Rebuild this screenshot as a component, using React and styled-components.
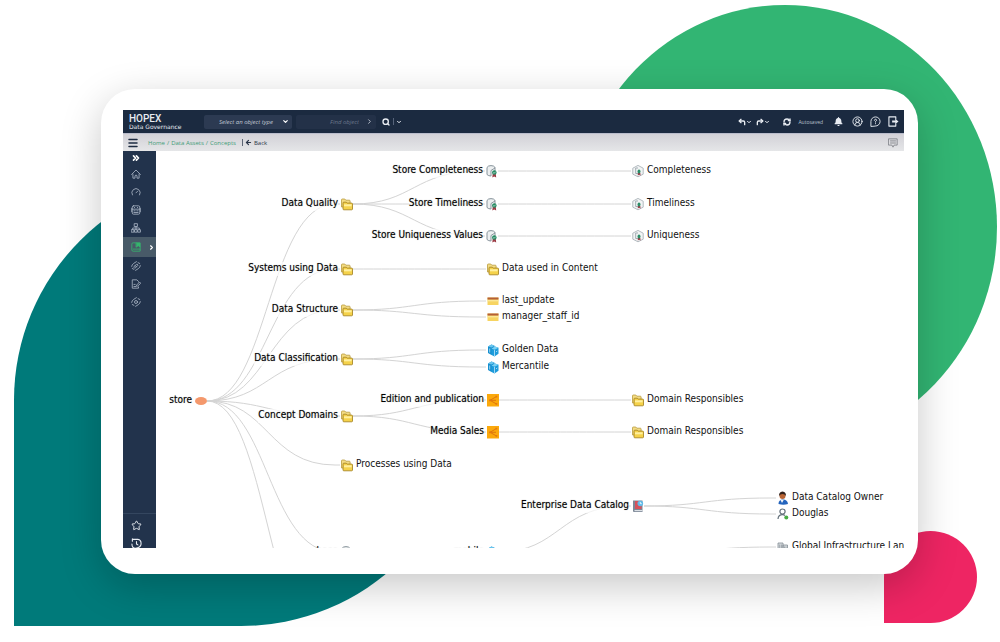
import styled, { createGlobalStyle, css } from 'styled-components';
import {
  ArrowLeft, ChevronDown, ChevronRight, ChevronsRight, CircleUserRound, CornerUpLeft, CornerUpRight,
  Gauge, Menu, RefreshCw, Search, Star,
} from 'lucide-react';
import { FaBell } from 'react-icons/fa';

const GlobalStyle = createGlobalStyle`
  * { box-sizing: border-box; }
  body {
    margin: 0;
    background: #fff;
    font-family: "Open Sans", "Noto Sans", sans-serif;
  }
  button, select, input { font: inherit; color: inherit; }
`;

const Page = styled.main`
  position: relative;
  display: flex;
  min-height: 100vh;
  padding: 89px 82px 68px 101px;
  overflow: hidden;
`;

const Blob = styled.div`
  position: absolute;
  ${({ $shape }) => $shape === 'green' && css`
    top: 5px; right: 3px; width: 424px; height: 444px;
    border-radius: 50%;
    background: #32b573;
  `}
  ${({ $shape }) => $shape === 'teal' && css`
    left: 14px; bottom: 16px; width: 454px; height: 452px;
    border-radius: 50% 50% 50% 0;
    background: #007a7a;
  `}
  ${({ $shape }) => $shape === 'pink' && css`
    right: 23px; bottom: 19px; width: 93px; height: 92px;
    border-radius: 50% 50% 50% 0;
    background: #ee2563;
  `}
`;

const Card = styled.div`
  position: relative;
  display: flex;
  flex: 1;
  min-width: 0;
  padding: 21px 14px 26px 22px;
  border-radius: 34px;
  background: #fff;
  box-shadow: 0 12px 40px rgba(0, 0, 0, 0.22);
`;

const Screen = styled.div`
  display: flex;
  flex: 1;
  flex-direction: column;
  min-width: 0;
  overflow: hidden;
`;

const TopBar = styled.header`
  display: flex;
  align-items: center;
  flex: 0 0 24px;
  padding: 0 5px 0 6px;
  border-bottom: 1px solid #b9bccb;
  background: #1b2a40;
  color: #e8ecf2;
`;

const Brand = styled.div`
  width: 75px;
`;

const BrandName = styled.div`
  font: 500 10px/9px Roboto, sans-serif;
`;

const BrandProduct = styled.div`
  font: 6px/7px "DejaVu Sans", sans-serif;
  white-space: nowrap;
`;

const Field = styled.label`
  display: flex;
  align-items: center;
  width: ${({ $width }) => $width}px;
  height: 14px;
  margin-right: 4px;
  padding-right: 3px;
  border-radius: 2px;
  background: ${({ $dim }) => ($dim ? '#233148' : '#2c3a52')};
  color: ${({ $dim }) => ($dim ? '#c3cad5' : '#fff')};
`;

const fieldText = css`
  flex: 1;
  min-width: 0;
  padding: 0;
  border: 0;
  outline: 0;
  background: none;
  font: italic 6px/12px "Open Sans", sans-serif;
  appearance: none;
`;

const TypeSelect = styled.select`
  ${fieldText}
  padding-left: 15px;
  color: #c3cad5;
`;

const ObjectInput = styled.input`
  ${fieldText}
  padding-right: 7px;
  text-align: right;
  &::placeholder { color: #6b788c; opacity: 1; }
`;

const IconButton = styled.button`
  display: flex;
  align-items: center;
  justify-content: center;
  flex: none;
  width: ${({ $width }) => $width || 12}px;
  height: 14px;
  padding: 0;
  border: 0;
  background: none;
`;

const Divider = styled.span`
  width: 1px;
  height: 7px;
  margin: 0 2px;
  background: ${({ $color }) => $color || '#56637a'};
`;

const Actions = styled.div`
  display: flex;
  align-items: center;
  margin-left: auto;
`;

const Group = styled.div`
  display: flex;
  align-items: center;
  margin-right: ${({ $after }) => $after || 0}px;
`;

const Saved = styled.span`
  margin: 0 9px 0 5px;
  color: #b9c1cd;
  font: 5px/8px "Open Sans", sans-serif;
`;

const CrumbBar = styled.nav`
  display: flex;
  align-items: center;
  flex: 0 0 17px;
  padding: 0 5px 0 4px;
  background: linear-gradient(#d2d1d7, #e5e6e8);
  color: #1d2b41;
  font-size: 6px;
  line-height: 12px;
`;

const Crumbs = styled.div`
  display: flex;
  gap: 2px;
  margin: 0 4px 0 9px;
  color: #3f9c78;
`;

const Crumb = styled.a`
  color: inherit;
  text-decoration: none;
`;

const BackLink = styled.a`
  display: flex;
  align-items: center;
  gap: 2px;
  margin-right: auto;
  color: #2a3649;
  text-decoration: none;
`;

const Body = styled.div`
  display: flex;
  flex: 1;
  min-height: 0;
`;

const Sidebar = styled.aside`
  display: flex;
  flex: 0 0 33px;
  flex-direction: column;
  background: #22334c;
  color: #a9b4c4;
`;

const SideItem = styled.button`
  display: flex;
  align-items: center;
  flex: none;
  gap: 7px;
  height: ${({ $active }) => ($active ? 20 : 18)}px;
  padding: 0 0 0 8px;
  border: 0;
  background: ${({ $active }) => ($active ? '#485a68' : 'none')};
  color: ${({ $active, $bright }) => ($active ? '#35b56d' : $bright ? '#e9edf3' : 'inherit')};
`;

const SideToggle = styled(SideItem)`
  height: 14px;
  color: #fff;
`;

const SideFooter = styled.div`
  display: flex;
  flex: 0 0 35px;
  flex-direction: column;
  margin-top: auto;
  padding-top: 2px;
  overflow: hidden;
  border-top: 1px solid #34465f;
`;

const Canvas = styled.section`
  position: relative;
  flex: 1;
  min-width: 0;
  overflow: hidden;
  background: #fff;
`;

const Edges = styled.svg`
  position: absolute;
  inset: 0;
  width: 100%;
  height: 100%;
  fill: none;
  stroke: #d4d4d4;
`;

const Node = styled.div`
  position: absolute;
  top: ${({ $y }) => $y - 8}px;
  display: flex;
  align-items: center;
  gap: 3px;
  height: 16px;
  ${({ $x, $before }) => ($before
    ? css`right: calc(100% - ${$x + 6}px); flex-direction: row-reverse;`
    : css`left: ${$x - 6}px;`)}
`;

const NodeLabel = styled.span`
  padding-bottom: 2px;
  color: #111;
  font: 10px/12px "DejaVu Sans Condensed", "DejaVu Sans", sans-serif;
  white-space: nowrap;
  ${({ $strong }) => $strong && css`
    background: rgba(255, 255, 255, 0.7);
    color: #000;
    text-shadow: 0 0 1px rgba(0, 0, 0, 0.4);
  `}
`;

const NodeIcon = styled.svg`
  flex: none;
  width: 12px;
  height: 12px;
  overflow: visible;
`;

const icons = {
  root: <ellipse cx="6" cy="6" rx="6" ry="4" fill="#f4986c" />,
  folder: (
    <>
      <path d="M.5 9V1.800Q.5 1 1.300 1h2.500l1 1.200h3.500q.8 0 .8.800v6z" fill="#f3dc84" stroke="#b99a3e" strokeWidth=".8" />
      <path d="M2 11V5q0-.8.800-.8h2.500l.8.900h4.600q.8 0 .8.800V11q0 .8-.8.800H2.800Q2 11.800 2 11z" fill="#f5d24a" stroke="#a07c1c" strokeWidth=".8" />
      <path d="M3 6.300h7.600v2H3z" fill="#fff0a0" />
    </>
  ),
  measure: (
    <>
      <path d="M1 2.500v7Q2.500 11 5 11V5.500L9 3V2.500Q8 .6 5 .6T1 2.500z" fill="#edf0f1" stroke="#87939b" />
      <path d="M9 2.500V6" fill="none" stroke="#87939b" />
      <path d="M6.800 8.500 6.300 12.500l1.900-1 2 1-.4-3.500z" fill="#9c3c46" />
      <circle cx="8.300" cy="7.500" r="2.300" fill="#258b63" />
      <path d="m7.200 7.500.9.9 1.500-1.700" fill="none" stroke="#fff" strokeWidth=".6" />
    </>
  ),
  quality: (
    <>
      <path d="M6 .4 11.200 3.200v6L6 11.800.8 9.200v-6z" fill="#f2f4f5" stroke="#aab3b9" strokeWidth=".9" />
      <path d="M6 3H3.700v5.500H6" fill="none" stroke="#a3adb3" />
      <path d="M6 8 5.700 10.500l1.400-.7 1.500.7L8.300 8z" fill="#9c3c46" />
      <ellipse cx="7" cy="6.400" rx="1.500" ry="2" fill="#2c8d68" />
    </>
  ),
  column: (
    <>
      <path d="M.5 2.500h11v7.500H.5z" fill="#f7d461" />
      <path d="M.5 2.500h11v2H.5z" fill="#b45f38" />
      <path d="M.5 5h11v1.400H.5z" fill="#fbe796" />
    </>
  ),
  cubes: (
    <>
      <path d="m1 2.500 3.500-2 3 1.200v7.500L4.500 11 1 9z" fill="#168fcf" />
      <path d="m1 2.500 3.500-2 3 1.200L4.500 3.500z" fill="#69c5ee" />
      <path d="m4.500 4.500 3.500-2 3.500 1.200v6L7.500 12.500l-3-1.500z" fill="#1d9bdb" />
      <path d="m4.500 4.500 3.500-2 3.500 1.200-4 2z" fill="#7bd0f3" />
      <path d="M7.500 6V12M2.700 4.500v4M9 7.800l1.300-.8" fill="none" stroke="#d8f2fd" strokeWidth=".7" />
    </>
  ),
  domain: (
    <>
      <path d="M0 0h12v12.500H0z" fill="#fba90c" />
      <path d="M9.500 2.500 3 6.300l6.500 3.700M3 6.300h6" fill="none" stroke="#d96f12" strokeWidth=".9" />
      <path d="M8.500 1.700h1.800v1.800H8.500zM2 5.400h1.800v1.800H2zM8.500 9h1.800v1.800H8.500z" fill="#e77b0e" />
    </>
  ),
  catalog: (
    <>
      <path d="M1 .5h9.500v11.500H2Q1 12 1 11z" fill="#7c8796" />
      <path d="M3 1h6.500v8H3z" fill="#d5525b" />
      <path d="M2.500 10h8v1.200h-8z" fill="#dbe0e5" />
      <circle cx="8.300" cy="3.500" r="2.800" fill="#5fbbea" />
      <path d="M8.300 2v1.700h1.500" fill="none" stroke="#fff" strokeWidth=".8" />
    </>
  ),
  owner: (
    <>
      <path d="M1.500 12q0-4.500 4.500-4.500t5 4.500q-4.500 1.500-9.500 0z" fill="#2464bd" />
      <path d="m3.500 8 1.500 3 1.700-3z" fill="#f3f5f8" />
      <circle cx="5.500" cy="4" r="3" fill="#b96434" />
      <path d="M2.200 4Q1.500.2 5.500-.5q4 .7 3.300 4.500-.8-2-3.300-2T2.200 4z" fill="#32211c" />
    </>
  ),
  user: (
    <>
      <circle cx="5.500" cy="3.600" r="2.600" fill="none" stroke="#63707a" strokeWidth="1.200" />
      <path d="M1 11q.3-4.300 4.500-4.300Q7 6.700 8 7.500" fill="none" stroke="#63707a" strokeWidth="1.200" />
      <circle cx="9.300" cy="9.500" r="2" fill="#46ac43" />
    </>
  ),
  building: (
    <>
      <path d="M1 2h5v9.500H1zM6 4h4.500v7.500H6z" fill="#d9dde0" stroke="#838d94" strokeWidth=".8" />
      <path d="M2.700 3.500v7M4.400 3.500v7M7.500 5.500v5M9 5.500v5" stroke="#838d94" strokeWidth=".7" />
    </>
  ),
};

// before: the label stands in front of the icon (the node is expanded)
const nodes = [
  { id: 'store', label: 'store', x: 45, y: 250, icon: 'root', before: true },
  { id: 'quality', label: 'Data Quality', x: 191, y: 53, icon: 'folder', before: true, parent: 'store' },
  { id: 'completeness', label: 'Store Completeness', x: 336, y: 20, icon: 'measure', before: true, parent: 'quality' },
  { id: 'timeliness', label: 'Store Timeliness', x: 336, y: 53, icon: 'measure', before: true, parent: 'quality' },
  { id: 'uniqueness', label: 'Store Uniqueness Values', x: 336, y: 85, icon: 'measure', before: true, parent: 'quality' },
  { label: 'Completeness', x: 482, y: 20, icon: 'quality', parent: 'completeness' },
  { label: 'Timeliness', x: 482, y: 53, icon: 'quality', parent: 'timeliness' },
  { label: 'Uniqueness', x: 482, y: 85, icon: 'quality', parent: 'uniqueness' },
  { id: 'systems', label: 'Systems using Data', x: 191, y: 118, icon: 'folder', before: true, parent: 'store' },
  { label: 'Data used in Content', x: 337, y: 118, icon: 'folder', parent: 'systems' },
  { id: 'structure', label: 'Data Structure', x: 191, y: 159, icon: 'folder', before: true, parent: 'store' },
  { label: 'last_update', x: 337, y: 150, icon: 'column', parent: 'structure' },
  { label: 'manager_staff_id', x: 337, y: 166, icon: 'column', parent: 'structure' },
  { id: 'classification', label: 'Data Classification', x: 191, y: 208, icon: 'folder', before: true, parent: 'store' },
  { label: 'Golden Data', x: 337, y: 199, icon: 'cubes', parent: 'classification' },
  { label: 'Mercantile', x: 337, y: 216, icon: 'cubes', parent: 'classification' },
  { id: 'domains', label: 'Concept Domains', x: 191, y: 265, icon: 'folder', before: true, parent: 'store' },
  { id: 'edition', label: 'Edition and publication', x: 337, y: 249, icon: 'domain', before: true, parent: 'domains' },
  { id: 'media', label: 'Media Sales', x: 337, y: 281, icon: 'domain', before: true, parent: 'domains' },
  { label: 'Domain Responsibles', x: 482, y: 249, icon: 'folder', parent: 'edition' },
  { label: 'Domain Responsibles', x: 482, y: 281, icon: 'folder', parent: 'media' },
  { label: 'Processes using Data', x: 191, y: 314, icon: 'folder', parent: 'store' },
  { id: 'base', label: 'base', x: 191, y: 401, icon: 'measure', before: true, parent: 'store' },
  { id: 'mobile', label: 'mobile', x: 337, y: 401, icon: 'cubes', before: true },
  { id: 'catalog', label: 'Enterprise Data Catalog', x: 482, y: 355, icon: 'catalog', before: true, parent: 'mobile' },
  { label: 'Data Catalog Owner', x: 627, y: 347, icon: 'owner', parent: 'catalog' },
  { label: 'Douglas', x: 627, y: 363, icon: 'user', parent: 'catalog' },
  { label: 'Global Infrastructure Lan', x: 627, y: 396, icon: 'building', parent: 'infra' },
];

// branches that run to nodes below the visible area
const anchors = [
  { id: 'infra', x: 482, y: 403 },
  { x: 191, y: 508, parent: 'store' },
];

const all = [...nodes, ...anchors];

const edgePath = (from, to) => {
  const start = from.x + 6;
  const end = to.x - 12;
  const mid = (from.x + end) / 2;
  return `M${start} ${from.y}C${mid} ${from.y} ${mid} ${to.y} ${end} ${to.y}H${to.x - 7}`;
};

const Tree = () => (
  <Canvas aria-label="Concept tree">
    <Edges>
      {all.filter((n) => n.parent).map((n, i) => (
        <path key={i} d={edgePath(all.find((p) => p.id === n.parent), n)} />
      ))}
    </Edges>
    {nodes.map((n, i) => (
      <Node key={i} $x={n.x} $y={n.y} $before={n.before}>
        <NodeIcon viewBox="0 0 12 12">{icons[n.icon]}</NodeIcon>
        <NodeLabel $strong={n.before}>{n.label}</NodeLabel>
      </Node>
    ))}
  </Canvas>
);

const Glyph = ({ size = 10, children }) => (
  <svg width={size} height={size} viewBox="0 0 12 12" fill="none" stroke="currentColor" strokeLinecap="round" strokeLinejoin="round">
    {children}
  </svg>
);

const HomeGlyph = () => (
  <Glyph>
    <path d="M.7 6.500 6 1.200l5.300 5.300M2.300 6v5h2.500V8Q6 6.500 7.200 8v3h2.500V6" />
  </Glyph>
);

const AssistantGlyph = () => (
  <Glyph>
    <rect x="1.500" y="1" width="9" height="10" rx="1.500" />
    <path d="M1.500 5h9M4 3h.3M7.700 3H8M3.500 7h1.500M7 7h1.500M3.500 9h5M.3 4v4M11.700 4v4" />
  </Glyph>
);

const OrgGlyph = () => (
  <Glyph>
    <path d="M4.300.8h3.400v3.400H4.300zM6 4.200V8M2 8V6h8v2M.7 8h2.800v3H.7zM4.600 8h2.800v3H4.600zM8.500 8h2.800v3H8.500z" />
  </Glyph>
);

const CatalogGlyph = () => (
  <Glyph>
    <path d="M6 1H2.500Q1 1 1 2.500v7Q1 11 2.500 11H11V8.500H2.500" />
    <path d="M11 6v2.500" />
    <path d="M6.500 1H11v5L8.700 4.500 6.500 6z" fill="currentColor" />
  </Glyph>
);

const OrbitGlyph = ({ square }) => (
  <Glyph>
    {square
      ? <path d="m3.500 7 3.500-3.500 1.500 1.500L5 8.500z M5 5.500l1.500 1.500" />
      : <circle cx="6" cy="6" r="1.800" />}
    <path d="M.8 6.500Q1 4.500 3 3l3.500-2.200M11.200 5.500Q11 7.500 9 9l-3.500 2.200M3.500 10 1.500 9M8.500 2l2 1" />
  </Glyph>
);

const ReportGlyph = () => (
  <Glyph>
    <path d="M9 9.500V11H1.500V1H7l2 2v.5M3.500 9h2.500M3.500 6.500H5M11.300 5.500 8 8.500H6.700V7.300L10 4z" />
  </Glyph>
);

const HelpGlyph = () => (
  <Glyph size={11}>
    <path d="M1 11V6a5 5 0 1 1 5 5z" />
    <path d="M4.800 4.700Q5 3.500 6 3.500t1.200 1Q7.200 5.300 6 6v.7M6 8.300v.2" />
  </Glyph>
);

const ExitGlyph = () => (
  <Glyph size={11}>
    <path d="M8.500 3.500V1H1v10h7.500V8.500" strokeWidth="1.200" />
    <path d="M4.500 5H8V3.200L11.500 6 8 8.800V7H4.500z" fill="currentColor" stroke="none" />
  </Glyph>
);

const HistoryGlyph = () => (
  <Glyph size={11}>
    <path d="M1.500 3.500V1M1.500 1.500h6Q11 2 11 6t-5 5-5-4.500M6 4v2.500l1.500 1" strokeWidth="1.200" />
  </Glyph>
);

const CommentGlyph = () => (
  <Glyph>
    <path d="M1 1h10v7.500H7.300L6 11 4.700 8.500H1zM3 3.500h6M3 6h6" stroke="#7d8086" />
  </Glyph>
);

const sideItems = [
  { label: 'Home', icon: <HomeGlyph /> },
  { label: 'Dashboards', icon: <Gauge size={10} /> },
  { label: 'Assistant', icon: <AssistantGlyph /> },
  { label: 'Organization', icon: <OrgGlyph /> },
  { label: 'Data Assets', icon: <CatalogGlyph />, active: true },
  { label: 'Lineage', icon: <OrbitGlyph square /> },
  { label: 'Reports', icon: <ReportGlyph /> },
  { label: 'Governance', icon: <OrbitGlyph /> },
];

const App = () => (
  <>
    <GlobalStyle />
    <Page>
      <Blob $shape="green" />
      <Blob $shape="teal" />
      <Blob $shape="pink" />
      <Card>
        <Screen>
          <TopBar>
            <Brand>
              <BrandName>HOPEX</BrandName>
              <BrandProduct>Data Governance</BrandProduct>
            </Brand>
            <Field $width={88}>
              <TypeSelect aria-label="Object type">
                <option>Select an object type</option>
              </TypeSelect>
              <ChevronDown size={7} strokeWidth={4} />
            </Field>
            <Field $width={80} $dim>
              <ObjectInput aria-label="Find object" placeholder="Find object" />
              <ChevronRight size={7} strokeWidth={3} />
            </Field>
            <Group>
              <IconButton aria-label="Search" $width={11}><Search size={8} strokeWidth={4} /></IconButton>
              <Divider />
              <IconButton aria-label="Search options" $width={6}><ChevronDown size={6} strokeWidth={4} /></IconButton>
            </Group>
            <Actions>
              <Group $after={4}>
                <IconButton aria-label="Undo" $width={8}><CornerUpLeft size={8} strokeWidth={4} /></IconButton>
                <IconButton aria-label="Undo list" $width={6}><ChevronDown size={6} strokeWidth={4} /></IconButton>
              </Group>
              <Group $after={11}>
                <IconButton aria-label="Redo" $width={8}><CornerUpRight size={8} strokeWidth={4} /></IconButton>
                <IconButton aria-label="Redo list" $width={6}><ChevronDown size={6} strokeWidth={4} /></IconButton>
              </Group>
              <IconButton aria-label="Refresh"><RefreshCw size={8} strokeWidth={4} /></IconButton>
              <Saved>Autosaved</Saved>
              <Group $after={7}>
                <IconButton aria-label="Notifications"><FaBell size={9} /></IconButton>
              </Group>
              <Group $after={6}>
                <IconButton aria-label="Account"><CircleUserRound size={11} strokeWidth={2} /></IconButton>
              </Group>
              <Group $after={6}>
                <IconButton aria-label="Help"><HelpGlyph /></IconButton>
              </Group>
              <IconButton aria-label="Sign out"><ExitGlyph /></IconButton>
            </Actions>
          </TopBar>
          <CrumbBar>
            <IconButton aria-label="Menu"><Menu size={12} strokeWidth={3} /></IconButton>
            <Crumbs>
              <Crumb href="#home">Home</Crumb>
              <span>/</span>
              <Crumb href="#assets">Data Assets</Crumb>
              <span>/</span>
              <Crumb href="#concepts">Concepts</Crumb>
            </Crumbs>
            <Divider $color="#5b6474" />
            <BackLink href="#back">
              <ArrowLeft size={7} strokeWidth={4} />
              Back
            </BackLink>
            <IconButton aria-label="Comments"><CommentGlyph /></IconButton>
          </CrumbBar>
          <Body>
            <Sidebar>
              <SideToggle aria-label="Expand"><ChevronsRight size={10} strokeWidth={4} /></SideToggle>
              {sideItems.map((item) => (
                <SideItem key={item.label} aria-label={item.label} $active={item.active}>
                  {item.icon}
                  {item.active && <ChevronRight size={7} strokeWidth={4} color="#fff" />}
                </SideItem>
              ))}
              <SideFooter>
                <SideItem aria-label="Favorites" $bright><Star size={11} /></SideItem>
                <SideItem aria-label="History" $bright><HistoryGlyph /></SideItem>
              </SideFooter>
            </Sidebar>
            <Tree />
          </Body>
        </Screen>
      </Card>
    </Page>
  </>
);

export default App;
